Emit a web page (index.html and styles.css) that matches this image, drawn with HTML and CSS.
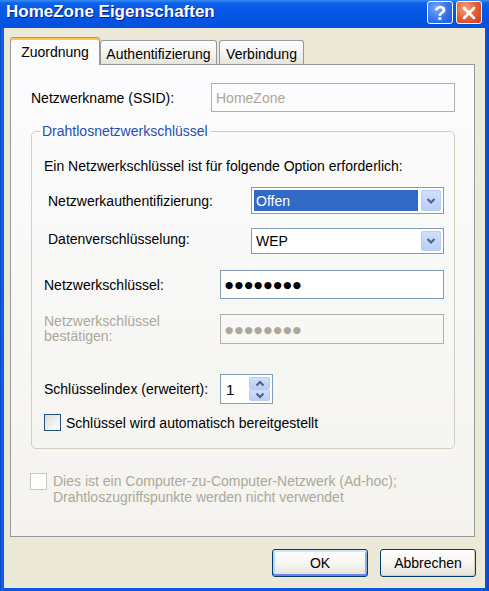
FILE: index.html
```html
<!DOCTYPE html>
<html lang="de">
<head>
<meta charset="utf-8">
<title>HomeZone Eigenschaften</title>
<link rel="stylesheet" href="styles.css">
</head>
<body>
<div class="window">
  <div class="titlebar">
    <span class="title">HomeZone Eigenschaften</span>
    <div class="tbtns">
      <span class="tbtn help">?</span>
      <span class="tbtn close"><svg width="14" height="14" viewBox="0 0 14 14"><path d="M2 2 L12 12 M12 2 L2 12" stroke="#fff" stroke-width="2.6" stroke-linecap="round"/></svg></span>
    </div>
  </div>
  <div class="client">
    <div class="tabs">
      <div class="tab active w-zu">Zuordnung</div>
      <div class="tab w-au">Authentifizierung</div>
      <div class="tab w-ve">Verbindung</div>
    </div>
    <div class="panel">
      <div class="ssid-row">
        <span>Netzwerkname (SSID):</span>
        <div class="edit disabled ssid">HomeZone</div>
      </div>
      <fieldset class="group">
        <legend>Drahtlosnetzwerkschlüssel</legend>
        <p class="intro">Ein Netzwerkschlüssel ist für folgende Option erforderlich:</p>
        <div class="combo-row first">
          <span class="clabel">Netzwerkauthentifizierung:</span>
          <div class="combo">
            <span class="val sel">Offen</span>
            <span class="drop"><svg width="12" height="10" viewBox="0 0 12 10"><path d="M2.5 3 L6 6.5 L9.5 3" fill="none" stroke="#4D6185" stroke-width="2"/></svg></span>
          </div>
        </div>
        <div class="combo-row second">
          <span class="clabel up">Datenverschlüsselung:</span>
          <div class="combo">
            <span class="val">WEP</span>
            <span class="drop"><svg width="12" height="10" viewBox="0 0 12 10"><path d="M2.5 3 L6 6.5 L9.5 3" fill="none" stroke="#4D6185" stroke-width="2"/></svg></span>
          </div>
        </div>
        <div class="field-row key">
          <span class="flabel">Netzwerkschlüssel:</span>
          <div class="edit key-edit"><span class="dots">●●●●●●●●</span></div>
        </div>
        <div class="field-row confirm">
          <span class="flabel dis two">Netzwerkschlüssel<br>bestätigen:</span>
          <div class="edit disabled key-edit conf"><span class="dots">●●●●●●●●</span></div>
        </div>
        <div class="field-row index">
          <span class="flabel">Schlüsselindex (erweitert):</span>
          <div class="spinner">
            <span class="spin-val">1</span>
            <span class="spin-btns">
              <span class="sb"><svg width="10" height="7" viewBox="0 0 10 7"><path d="M1.5 5.5 L5 2 L8.5 5.5" fill="none" stroke="#4D6185" stroke-width="2"/></svg></span>
              <span class="sb"><svg width="10" height="7" viewBox="0 0 10 7"><path d="M1.5 1.5 L5 5 L8.5 1.5" fill="none" stroke="#4D6185" stroke-width="2"/></svg></span>
            </span>
          </div>
        </div>
        <div class="check-row">
          <span class="box"></span>
          <span>Schlüssel wird automatisch bereitgestellt</span>
        </div>
      </fieldset>
      <div class="adhoc">
        <span class="box dis"></span>
        <span>Dies ist ein Computer-zu-Computer-Netzwerk (Ad-hoc);<br>Drahtloszugriffspunkte werden nicht verwendet</span>
      </div>
    </div>
    <div class="buttons">
      <div class="btn default">OK</div>
      <div class="btn">Abbrechen</div>
    </div>
  </div>
</div>
</body>
</html>
```
FILE: styles.css
```css
* { box-sizing: border-box; }
html, body { margin: 0; padding: 0; }
body {
  width: 489px;
  height: 591px;
  overflow: hidden;
  font-family: "Liberation Sans", Arial, sans-serif;
  font-size: 14px;
  color: #000;
}
.window {
  width: 489px;
  height: 591px;
  display: flex;
  flex-direction: column;
  background: linear-gradient(to right, #0040c4 0, #1a66ea 2px, #0a56de 4px, #0a56de 485px, #0845cc 489px);
}
.titlebar {
  height: 28px;
  flex: none;
  display: flex;
  align-items: flex-start;
  background: linear-gradient(to bottom, #3a8cf6 0, #0d62ea 3px, #0659e6 9px, #0455e3 18px, #0351dd 28px);
}
.title {
  color: #fff;
  font-weight: bold;
  font-size: 17px;
  line-height: 24px;
  padding-left: 6px;
  text-shadow: 1px 1px 0 #0a1a88;
}
.tbtns {
  margin-left: auto;
  margin-right: 7px;
  padding-top: 1px;
  display: flex;
  gap: 3px;
}
.tbtn {
  width: 26px;
  height: 23px;
  border: 1px solid #fff;
  border-radius: 3px;
  display: grid;
  place-items: center;
  color: #fff;
  font-weight: bold;
  font-size: 20px;
  line-height: 1;
}
.help {
  background: radial-gradient(circle at 35% 30%, #7aa8f8 0, #3573ea 55%, #2058d8 100%);
}
.close {
  background: radial-gradient(circle at 35% 30%, #f2a384 0, #e35a31 55%, #c7401a 100%);
}
.client {
  flex: 1;
  margin: 0 4px 3px;
  background: #ece9d8;
  padding: 9px 10px 11px 6px;
  display: flex;
  flex-direction: column;
}
.tabs {
  height: 27px;
  flex: none;
  display: flex;
  align-items: flex-end;
}
.tab {
  height: 24px;
  border: 1px solid #919b9c;
  border-bottom: none;
  border-radius: 3px 3px 0 0;
  background: linear-gradient(#ffffff, #f3f2ed 60%, #e6e4da);
  display: flex;
  align-items: center;
  justify-content: center;
  line-height: 1;
  padding-top: 2px;
}
.tab.active {
  height: 28px;
  margin-bottom: -1px;
  position: relative;
  z-index: 1;
  background: #fcfcfe;
  border-top: 1px solid #e68b2c;
  box-shadow: inset 0 2px 0 #ffc83c;
  padding-top: 1px;
}
.w-zu { width: 90px; }
.w-au { width: 117px; }
.w-ve { width: 85px; margin-left: 2px; }
.panel {
  flex: 1;
  border: 1px solid #919b9c;
  background: linear-gradient(#fcfcfe, #f4f3ee);
  padding: 18px 19px 0 20px;
}
.ssid-row {
  height: 29px;
  display: flex;
  align-items: center;
  justify-content: space-between;
}
.edit {
  border: 1px solid #7f9db9;
  background: #fff;
  display: flex;
  align-items: center;
  padding: 0 4px;
}
.edit.disabled {
  border-color: #b3b1a7;
  background: transparent;
  color: #aca899;
}
.ssid {
  width: 244px;
  height: 29px;
}
.group {
  margin: 11px 0 0;
  padding: 19px 10px 17px 12px;
  border: 1px solid #d0d0bf;
  border-radius: 5px;
  min-width: 0;
}
.group legend {
  padding: 0 2px;
  margin-left: -4px;
  color: #1f4fb5;
  line-height: 16px;
}
.intro {
  margin: 0;
  line-height: 16px;
}
.combo-row {
  height: 27px;
  display: flex;
  align-items: center;
  justify-content: space-between;
}
.combo-row.first { margin-top: 13px; }
.combo-row.second { margin-top: 14px; height: 26px; }
.clabel { margin-left: 4px; }
.clabel.up { margin-bottom: 5px; }
.combo {
  width: 193px;
  height: 100%;
  border: 1px solid #7f9db9;
  background: #fff;
  display: flex;
  gap: 3px;
  padding: 2px;
}
.val {
  flex: 1;
  display: flex;
  align-items: center;
  padding-left: 2px;
}
.val.sel {
  background: #316ac5;
  color: #fff;
}
.drop {
  width: 20px;
  border: 1px solid #b7cbf5;
  border-radius: 2px;
  background: linear-gradient(#d2e0fd, #b9cdf7);
  display: grid;
  place-items: center;
}
.field-row {
  display: flex;
  align-items: center;
}
.field-row.key { margin-top: 16px; }
.field-row.confirm { margin-top: 15px; }
.field-row.index { margin-top: 30px; }
.flabel {
  width: 176px;
  flex: none;
}
.flabel.dis { color: #aca899; }
.flabel.two { line-height: 15px; }
.key-edit {
  width: 224px;
  height: 29px;
}
.key-edit.conf { height: 30px; }
.dots {
  font-family: "DejaVu Sans", sans-serif;
  font-size: 9.5px;
  letter-spacing: 1.4px;
}
.spinner {
  width: 53px;
  height: 30px;
  border: 1px solid #7f9db9;
  background: #fff;
  display: flex;
  padding: 2px;
}
.spin-val {
  flex: 1;
  display: flex;
  align-items: center;
  padding-left: 3px;
  font-size: 15px;
}
.spin-btns {
  width: 21px;
  display: flex;
  flex-direction: column;
}
.sb {
  flex: 1;
  border: 1px solid #b7cbf5;
  border-radius: 2px;
  background: linear-gradient(#d2e0fd, #b9cdf7);
  display: grid;
  place-items: center;
}
.check-row {
  margin-top: 10px;
  height: 17px;
  display: flex;
  align-items: center;
  gap: 5px;
}
.box {
  width: 17px;
  height: 17px;
  flex: none;
  border: 1px solid #1c5180;
  background: linear-gradient(135deg, #dcdcd7, #ffffff);
}
.box.dis {
  border-color: #cac8bb;
  background: #fff;
}
.adhoc {
  margin-top: 24px;
  margin-left: -1px;
  display: flex;
  gap: 6px;
  color: #aca899;
  line-height: 16px;
}
.buttons {
  margin-top: 12px;
  height: 28px;
  flex: none;
  display: flex;
  justify-content: flex-end;
  gap: 12px;
  margin-right: -1px;
}
.btn {
  width: 96px;
  height: 28px;
  border: 1px solid #003c74;
  border-radius: 3px;
  background: linear-gradient(#ffffff, #f5f4f0 55%, #e3e0d6);
  box-shadow: inset -1px -1px 0 #d6d0c5;
  display: grid;
  place-items: center;
}
.btn.default {
  box-shadow: inset 0 2px 0 #cee7ff, inset 0 -2px 0 #6982ee, inset 2px 0 0 #bcd4f6, inset -2px 0 0 #89ade4;
}
```
